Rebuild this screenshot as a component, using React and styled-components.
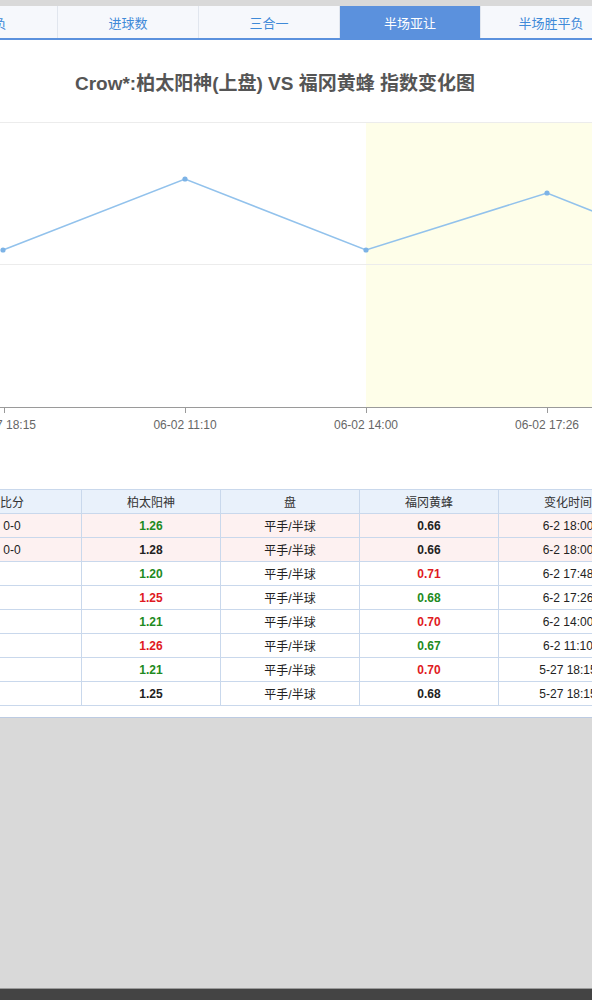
import React from "react";
import styled, { createGlobalStyle } from "styled-components";

const GlobalStyle = createGlobalStyle`
  html, body {
    margin: 0;
    padding: 0;
    background: #d9d9d9;
    font-family: "Liberation Sans", "Noto Sans CJK SC", sans-serif;
  }
  #root {
    width: 592px;
    overflow: hidden;
  }
`;

const Page = styled.div`
  width: 592px;
  height: 1000px;
  display: flex;
  flex-direction: column;
  overflow: hidden;
  background: #d9d9d9;
`;

const TopGap = styled.div`
  height: 6px;
  flex: none;
`;

const Panel = styled.div`
  background: #fff;
  flex: none;
  border-bottom: 1px solid #bccbe2;
  overflow: hidden;
`;

const TabBar = styled.div`
  display: flex;
  margin-left: -83px;
  height: 32px;
  border-bottom: 2px solid #5b91dd;
  background: #f6f8fc;
`;

const Tab = styled.div`
  flex: none;
  width: 141px;
  display: flex;
  align-items: center;
  justify-content: center;
  font-size: 13px;
  color: ${(p) => (p.active ? "#fff" : "#3f8ad8")};
  background: ${(p) => (p.active ? "#5b91dd" : "transparent")};
  border-right: 1px solid #e1e6ee;
  box-sizing: border-box;
`;

const Title = styled.div`
  height: 80px;
  display: flex;
  align-items: center;
  justify-content: center;
  padding-right: 42px;
  padding-top: 2px;
  box-sizing: border-box;
  font-size: 19px;
  font-weight: bold;
  color: #555;
`;

const Chart = styled.svg`
  display: block;
  width: 592px;
  height: 369px;
`;

const Table = styled.table`
  margin-left: -58px;
  border-collapse: collapse;
  table-layout: fixed;
  width: 696px;
  font-size: 12px;
  color: #333;
  margin-bottom: 11px;
`;

const Th = styled.th`
  height: 23px;
  padding: 0;
  font-weight: normal;
  background: #e9f1fb;
  border: 1px solid #c9d8ec;
  text-align: center;
`;

const Td = styled.td`
  height: 23px;
  padding: 0;
  border: 1px solid #c9d8ec;
  text-align: center;
  background: ${(p) => (p.hot ? "#fdf1f1" : "#fff")};
  font-weight: ${(p) => (p.bold ? "bold" : "normal")};
  color: ${(p) =>
    p.tone === "up" ? "#e01a22" : p.tone === "down" ? "#218a21" : "#222"};
`;

const Footer = styled.div`
  margin-top: auto;
  height: 11px;
  flex: none;
  background: #444;
  border-top: 1px solid #9a9a9a;
`;

const tabs = ["胜平负", "进球数", "三合一", "半场亚让", "半场胜平负"];

const rows = [
  { score: "0-0", home: "1.26", ht: "down", line: "平手/半球", away: "0.66", at: "", time: "6-2 18:00", hot: true },
  { score: "0-0", home: "1.28", ht: "", line: "平手/半球", away: "0.66", at: "", time: "6-2 18:00", hot: true },
  { score: "", home: "1.20", ht: "down", line: "平手/半球", away: "0.71", at: "up", time: "6-2 17:48" },
  { score: "", home: "1.25", ht: "up", line: "平手/半球", away: "0.68", at: "down", time: "6-2 17:26" },
  { score: "", home: "1.21", ht: "down", line: "平手/半球", away: "0.70", at: "up", time: "6-2 14:00" },
  { score: "", home: "1.26", ht: "up", line: "平手/半球", away: "0.67", at: "down", time: "6-2 11:10" },
  { score: "", home: "1.21", ht: "down", line: "平手/半球", away: "0.70", at: "up", time: "5-27 18:15" },
  { score: "", home: "1.25", ht: "", line: "平手/半球", away: "0.68", at: "", time: "5-27 18:15" },
];

const points = [
  [3, 130],
  [185, 59],
  [366, 130],
  [547, 73],
];

const ticks = [
  { x: 4, label: "05-27 18:15" },
  { x: 185, label: "06-02 11:10" },
  { x: 366, label: "06-02 14:00" },
  { x: 547, label: "06-02 17:26" },
];

function IndexChart() {
  const line = points.map((p) => p.join(",")).join(" ") + " 600,94";
  return (
    <Chart viewBox="0 0 592 369">
      <rect x="366" y="2" width="226" height="285" fill="#fefee9" />
      <line x1="0" x2="592" y1="2.5" y2="2.5" stroke="#ececec" />
      <line x1="0" x2="592" y1="144.5" y2="144.5" stroke="#ececec" />
      <line x1="0" x2="592" y1="287.5" y2="287.5" stroke="#9a9a9a" />
      {ticks.map((t) => (
        <g key={t.x}>
          <line x1={t.x + 0.5} x2={t.x + 0.5} y1="287" y2="293" stroke="#9a9a9a" />
          <text
            x={t.x}
            y="309"
            textAnchor="middle"
            fontSize="12"
            fill="#666"
            fontFamily='"Liberation Sans", sans-serif'
          >
            {t.label}
          </text>
        </g>
      ))}
      <polyline points={line} fill="none" stroke="#92c2ec" strokeWidth="1.6" />
      {points.map(([x, y]) => (
        <circle key={x} cx={x} cy={y} r="2.6" fill="#7db3e6" />
      ))}
    </Chart>
  );
}

export default function App() {
  return (
    <Page>
      <GlobalStyle />
      <TopGap />
      <Panel>
        <TabBar>
          {tabs.map((t) => (
            <Tab key={t} active={t === "半场亚让"}>
              {t}
            </Tab>
          ))}
        </TabBar>
        <Title>Crow*:柏太阳神(上盘) VS 福冈黄蜂 指数变化图</Title>
        <IndexChart />
        <Table>
          <thead>
            <tr>
              <Th>比分</Th>
              <Th>柏太阳神</Th>
              <Th>盘</Th>
              <Th>福冈黄蜂</Th>
              <Th>变化时间</Th>
            </tr>
          </thead>
          <tbody>
            {rows.map((r, i) => (
              <tr key={i}>
                <Td hot={r.hot}>{r.score}</Td>
                <Td hot={r.hot} bold tone={r.ht}>
                  {r.home}
                </Td>
                <Td hot={r.hot}>{r.line}</Td>
                <Td hot={r.hot} bold tone={r.at}>
                  {r.away}
                </Td>
                <Td hot={r.hot}>{r.time}</Td>
              </tr>
            ))}
          </tbody>
        </Table>
      </Panel>
      <Footer />
    </Page>
  );
}
